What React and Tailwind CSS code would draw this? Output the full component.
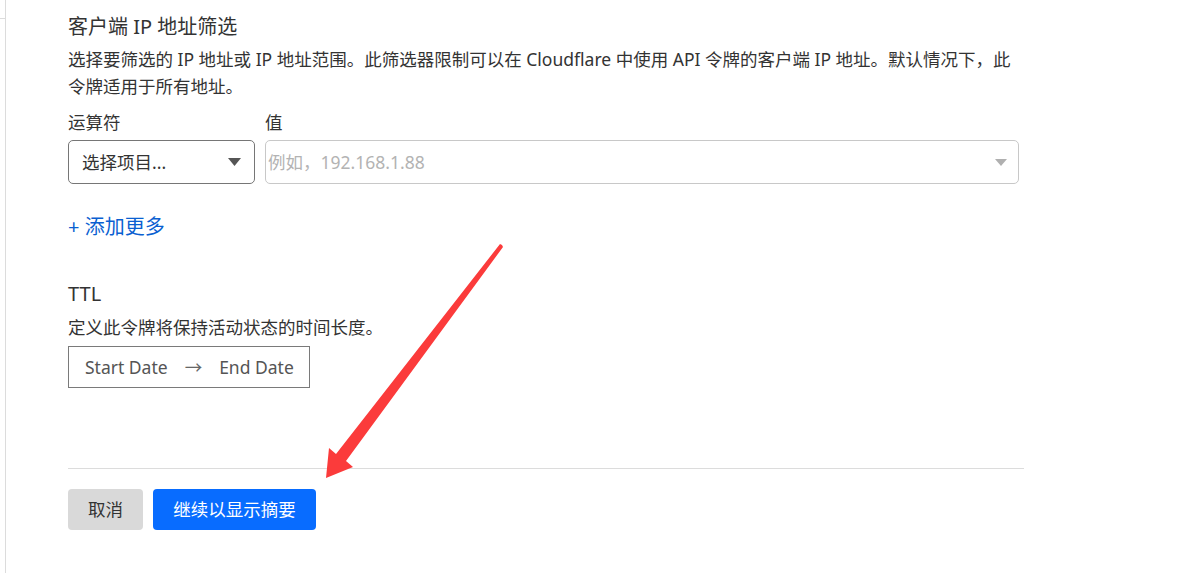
import React from "react";

const font = { fontFamily: '"Noto Sans", "Noto Sans CJK SC", sans-serif' };

export default function App() {
  return (
    <div
      className="relative flex h-[573px] w-full overflow-hidden bg-white text-[#333]"
      style={font}
    >
      <div className="w-[6px] shrink-0 border-r border-[#dcdcdc]">
        <div className="h-[19px] border-b border-[#dcdcdc]" />
      </div>
      <div className="flex w-[1018px] flex-col pl-[62px]">
        <h2 className="pt-[13px] text-[20px] font-normal leading-[28px]">
          客户端 IP 地址筛选
        </h2>
        <p className="mt-[5px] w-[956px] text-[17.5px] leading-[27px]">
          选择要筛选的 IP 地址或 IP 地址范围。此筛选器限制可以在 Cloudflare 中使用 API 令牌的客户端 IP 地址。默认情况下，此令牌适用于所有地址。
        </p>
        <div className="mt-[10px] flex gap-[10px] text-[17.5px] leading-[24px]">
          <div className="w-[187px]">运算符</div>
          <div>值</div>
        </div>
        <div className="mt-[6px] flex h-[44px] gap-[10px]">
          <div className="flex w-[187px] items-center justify-between rounded-[5px] border border-[#767676] pl-[13px] pr-[13px] text-[17.5px]">
            <span>选择项目...</span>
            <svg width="13" height="8" viewBox="0 0 13 8">
              <path d="M0 0h13L6.5 8z" fill="#555" />
            </svg>
          </div>
          <div className="flex w-[754px] items-center justify-between rounded-[5px] border border-[#c8c8c8] pl-[2px] pr-[11px] text-[17.5px] text-[#b3b3b3]">
            <span>例如，192.168.1.88</span>
            <svg width="12" height="7" viewBox="0 0 12 7">
              <path d="M0 0h12L6 7z" fill="#b0b0b0" />
            </svg>
          </div>
        </div>
        <div className="mt-[29px] text-[20px] leading-[28px] text-[#0a5fd1]">
          + 添加更多
        </div>
        <h3 className="mt-[39px] text-[20px] font-normal leading-[28px]">TTL</h3>
        <p className="mt-[6px] text-[17.5px] leading-[27px]">
          定义此令牌将保持活动状态的时间长度。
        </p>
        <div className="mt-[5px] flex h-[42px] w-[242px] items-center gap-[17px] border border-[#7a7a7a] pl-[16px] text-[17.5px] text-[#555]">
          <span>Start Date</span>
          <span className="text-[#666]">→</span>
          <span>End Date</span>
        </div>
        <div className="mt-[80px] w-[956px] border-t border-[#dcdcdc]" />
        <div className="mt-[20px] flex gap-[10px]">
          <button className="h-[41px] w-[75px] rounded-[4px] bg-[#d9d9d9] text-[17.5px] text-[#333]">
            取消
          </button>
          <button className="h-[41px] w-[163px] rounded-[4px] bg-[#086cff] text-[17.5px] text-white">
            继续以显示摘要
          </button>
        </div>
      </div>
      <svg
        className="pointer-events-none absolute left-0 top-0"
        width="1185"
        height="573"
        viewBox="0 0 1185 573"
      >
        <polygon
          points="502,245 503,247 346,461 353,467 326,478 329,448 336,454 500,244"
          fill="#fb3b3b"
        />
      </svg>
    </div>
  );
}
